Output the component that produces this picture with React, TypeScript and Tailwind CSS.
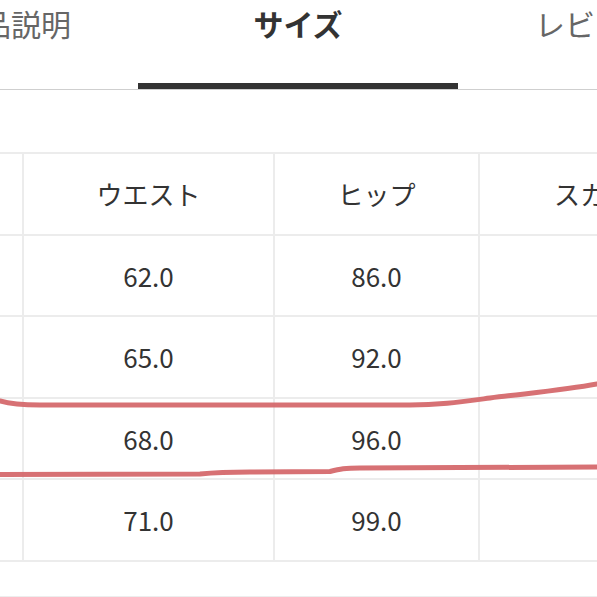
import React from "react";

const headers = ["サイズ", "ウエスト", "ヒップ", "スカート丈"];
const rows = [
  ["S", "62.0", "86.0", ""],
  ["M", "65.0", "92.0", ""],
  ["L", "68.0", "96.0", ""],
  ["XL", "71.0", "99.0", ""],
];
const widths = ["w-[250px]", "w-[251px]", "w-[205px]", "w-[280px]"];

function Cell({ text, i }: { text: string; i: number }) {
  return (
    <div
      className={`${widths[i]} shrink-0 h-[81.5px] flex items-center justify-center border-r-2 border-b-2 border-[#ececec] text-[26px] text-[#333]`}
    >
      {i === 0 ? "" : text}
    </div>
  );
}

export default function App() {
  return (
    <div
      className="w-[597px] h-[597px] overflow-hidden relative bg-white"
      style={{ fontFamily: '"Noto Sans CJK JP", "Noto Sans", sans-serif' }}
    >
      {/* Tabs */}
      <div className="flex h-[90px] border-b border-[#cfcfcf]">
        <div className="w-[138px] shrink-0 flex justify-end pr-[67px] pt-[5px]">
          <span className="text-[30px] leading-[37px] text-[#666] whitespace-nowrap">商品説明</span>
        </div>
        <div className="w-[320px] shrink-0 flex flex-col items-center justify-between pt-[5px]">
          <span className="text-[30px] leading-[37px] font-bold text-[#333] whitespace-nowrap">サイズ</span>
          <div className="w-full h-[6px] bg-[#333]" />
        </div>
        <div className="w-[200px] shrink-0 pl-[77px] pt-[5px]">
          <span className="text-[30px] leading-[37px] text-[#666] whitespace-nowrap">レビュー</span>
        </div>
      </div>

      {/* Table */}
      <div className="mt-[62px] ml-[-226px] w-[1000px] border-t-2 border-[#ececec]">
        <div className="flex">
          {headers.map((h, i) => (
            <Cell key={i} text={h} i={i} />
          ))}
        </div>
        {rows.map((r, ri) => (
          <div key={ri} className="flex">
            {r.map((c, i) => (
              <Cell key={i} text={c} i={i} />
            ))}
          </div>
        ))}
      </div>
      <div className="mt-[34px] h-[2px] bg-[#ededed]" />

      {/* Hand-drawn red annotation lines */}
      <svg
        className="absolute left-0 top-0 pointer-events-none"
        width="597"
        height="597"
        viewBox="0 0 597 597"
      >
        <path
          d="M0,401 C10,404 20,405 40,405 L410,405 C440,405 460,402 490,398 C530,393 565,390 597,384"
          fill="none"
          stroke="#d5696d"
          strokeWidth="5"
          strokeLinecap="round"
          opacity="0.95"
        />
        <path
          d="M0,474.5 L200,474 C215,472.5 230,472 250,472 L330,471.5 C340,469 345,468 360,468 L597,467"
          fill="none"
          stroke="#d5696d"
          strokeWidth="5"
          strokeLinecap="round"
          opacity="0.95"
        />
      </svg>
    </div>
  );
}
